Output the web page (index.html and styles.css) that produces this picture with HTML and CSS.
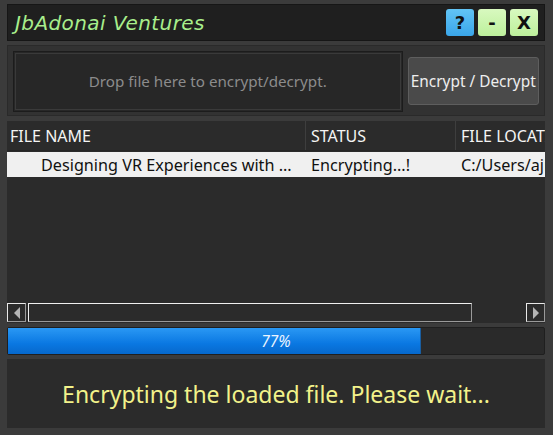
FILE: index.html
```html
<!DOCTYPE html>
<html>
<head>
<meta charset="utf-8">
<link rel="stylesheet" href="styles.css">
</head>
<body>
<div class="window">
  <div class="titlebar">
    <div class="title">JbAdonai Ventures</div>
    <div class="tbuttons">
      <div class="tbtn help">?</div>
      <div class="tbtn min">-</div>
      <div class="tbtn close">X</div>
    </div>
  </div>
  <div class="drop-panel">
    <div class="drop-area">Drop file here to encrypt/decrypt.</div>
    <div class="action-btn">Encrypt / Decrypt</div>
  </div>
  <div class="table">
    <div class="thead">
      <div class="col c1">FILE NAME</div>
      <div class="col c2">STATUS</div>
      <div class="col c3">FILE LOCATION</div>
    </div>
    <div class="trow">
      <div class="col c1 indent">Designing VR Experiences with ...</div>
      <div class="col c2">Encrypting...!</div>
      <div class="col c3">C:/Users/ajibola/Documents</div>
    </div>
    <div class="tbody-fill"></div>
    <div class="hscroll">
      <div class="sarrow"><span class="tri left"></span></div>
      <div class="thumb"></div>
      <div class="track-rest"></div>
      <div class="sarrow"><span class="tri right"></span></div>
    </div>
  </div>
  <div class="progress">
    <div class="fill" style="width:77%"></div>
    <div class="ptext">77%</div>
  </div>
  <div class="status">Encrypting the loaded file. Please wait...</div>
</div>
</body>
</html>
```

FILE: styles.css
```css
html, body {
  margin: 0;
  padding: 0;
}
body {
  background: #3b3b3b;
  font-family: "Noto Sans", "Open Sans", sans-serif;
}
.window {
  width: 553px;
  height: 435px;
  box-sizing: border-box;
  padding: 4px 8px 7px 7px;
  display: flex;
  flex-direction: column;
  gap: 4px;
}
.titlebar {
  height: 37px;
  box-sizing: border-box;
  background: #1f1f1f;
  border: 1px solid #161616;
  display: flex;
  align-items: center;
  justify-content: space-between;
  padding: 0 6px 0 7px;
}
.title {
  font-family: "DejaVu Sans", sans-serif;
  font-style: italic;
  font-size: 20px;
  color: #a8ee8c;
  letter-spacing: 0.4px;
}
.tbuttons {
  display: flex;
  gap: 4px;
}
.tbtn {
  width: 28px;
  height: 27px;
  border-radius: 3px;
  display: flex;
  align-items: center;
  justify-content: center;
  font-family: "DejaVu Sans", sans-serif;
  font-weight: bold;
  font-size: 18px;
  color: #111;
}
.help { background: linear-gradient(#62c4f5, #3aa6ea); }
.min, .close { background: linear-gradient(#d8f9bf, #bdf09c); }
.drop-panel {
  height: 71px;
  box-sizing: border-box;
  background: #323232;
  border: 1px solid #2a2a2a;
  display: flex;
  align-items: center;
  padding: 4px 5px 3px 5px;
  gap: 5px;
}
.drop-area {
  width: 391px;
  height: 61px;
  box-sizing: border-box;
  background: #272727;
  border: 1px solid #1c1c1c;
  outline: 1px solid #3a3a3a;
  outline-offset: -3px;
  display: flex;
  align-items: center;
  justify-content: center;
  color: #8c8c8c;
  font-size: 15.2px;
}
.action-btn {
  width: 132px;
  height: 48px;
  box-sizing: border-box;
  background: #4a4a4a;
  border: 1px solid #5e5e5e;
  border-radius: 3px;
  display: flex;
  align-items: center;
  justify-content: center;
  color: #eeeeee;
  font-size: 15.4px;
  white-space: nowrap;
}
.table {
  margin-top: 1px;
  height: 202px;
  background: #2b2b2b;
  display: flex;
  flex-direction: column;
  overflow: hidden;
}
.thead, .trow {
  display: flex;
  white-space: nowrap;
}
.thead {
  height: 29px;
  align-items: center;
  color: #f4f4f4;
  font-size: 16px;
  border-bottom: 1px solid #262626;
}
.thead .col {
  border-right: 1px solid #3e3e3e;
  height: 29px;
  display: flex;
  align-items: center;
}
.col {
  box-sizing: border-box;
  padding-left: 3px;
  overflow: hidden;
  flex: none;
}
.c1 { width: 299px; }
.c2 { width: 150px; padding-left: 5px; }
.c3 { width: 150px; padding-left: 5px; border-right: none !important; }
.trow {
  height: 25px;
  margin-top: 1px;
  background: #f0f0f0;
  color: #111;
  font-size: 16.2px;
  align-items: center;
}
.indent { padding-left: 34px; }
.tbody-fill {
  flex: 1;
}
.hscroll {
  height: 19px;
  display: flex;
  gap: 2px;
  margin-bottom: 1px;
  align-items: stretch;
}
.sarrow {
  width: 19px;
  box-sizing: border-box;
  border-top: 1px solid #e8e8e8;
  border-left: 1px solid #e8e8e8;
  border-right: 1px solid #9a9a9a;
  border-bottom: 1px solid #9a9a9a;
  display: flex;
  align-items: center;
  justify-content: center;
}
.tri {
  width: 0;
  height: 0;
  border-top: 6px solid transparent;
  border-bottom: 6px solid transparent;
}
.tri.left { border-right: 6px solid #b4b4b4; }
.tri.right { border-left: 6px solid #b4b4b4; }
.thumb {
  width: 444px;
  box-sizing: border-box;
  border-top: 1px solid #f0f0f0;
  border-left: 1px solid #f0f0f0;
  border-right: 1px solid #9a9a9a;
  border-bottom: 1px solid #9a9a9a;
}
.track-rest { flex: 1; }
.progress {
  height: 28px;
  box-sizing: border-box;
  background: #2a2a2a;
  border: 1px solid #1f1f1f;
  border-radius: 2px;
  position: relative;
}
.fill {
  height: 100%;
  background: linear-gradient(#2a98f4, #0a78e2 60%, #0668cc);
  border-right: 1px solid #1a5ea0;
  box-sizing: border-box;
}
.ptext {
  position: absolute;
  inset: 0;
  display: flex;
  align-items: center;
  justify-content: center;
  color: #eaf4ff;
  font-style: italic;
  font-size: 15.5px;
}
.status {
  flex: 1;
  background: #2b2b2b;
  display: flex;
  align-items: center;
  justify-content: center;
  color: #f2f28a;
  font-size: 23px;
}
```
